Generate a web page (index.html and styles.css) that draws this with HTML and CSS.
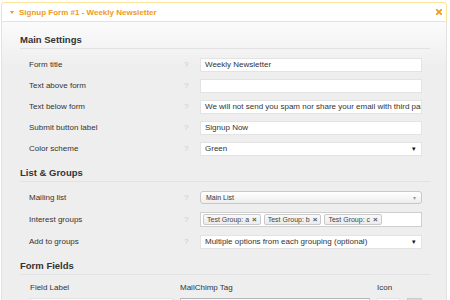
FILE: index.html
```html
<!DOCTYPE html>
<html lang="en">
<head>
  <meta charset="UTF-8">
  <title>Signup Form #1 - Weekly Newsletter</title>
  <link rel="stylesheet" href="styles.css">
</head>
<body>

  <div class="panel">
    <div class="panel-header">
      <span class="caret"></span>
      <span class="panel-title">Signup Form #1 - Weekly Newsletter</span>
      <svg class="close" width="6" height="6" viewBox="0 0 6 6">
        <path d="M0.8 0.8 L5.2 5.2 M5.2 0.8 L0.8 5.2" stroke="#f09a1a" stroke-width="1.8" stroke-linecap="square"/>
      </svg>
    </div>

    <div class="panel-body">
      <h2 class="section-title">Main Settings</h2>

      <div class="row">
        <span class="row-label">Form title</span>
        <span class="help">?</span>
        <div class="field">Weekly Newsletter</div>
      </div>
      <div class="row">
        <span class="row-label">Text above form</span>
        <span class="help">?</span>
        <div class="field"></div>
      </div>
      <div class="row">
        <span class="row-label">Text below form</span>
        <span class="help">?</span>
        <div class="field">We will not send you spam nor share your email with third parties.</div>
      </div>
      <div class="row">
        <span class="row-label">Submit button label</span>
        <span class="help">?</span>
        <div class="field">Signup Now</div>
      </div>
      <div class="row">
        <span class="row-label">Color scheme</span>
        <span class="help">?</span>
        <div class="field select">
          <span class="select-text">Green</span>
          <span class="arrow">&#9662;</span>
        </div>
      </div>

      <h2 class="section-title">List &amp; Groups</h2>

      <div class="row">
        <span class="row-label">Mailing list</span>
        <span class="help">?</span>
        <div class="chosen">
          <span class="select-text">Main List</span>
          <span class="arrow">&#9662;</span>
        </div>
      </div>
      <div class="row row-tall">
        <span class="row-label">Interest groups</span>
        <span class="help">?</span>
        <div class="tags">
          <span class="tag">Test Group: a <b>&#215;</b></span>
          <span class="tag">Test Group: b <b>&#215;</b></span>
          <span class="tag">Test Group: c <b>&#215;</b></span>
        </div>
      </div>
      <div class="row">
        <span class="row-label">Add to groups</span>
        <span class="help">?</span>
        <div class="field select">
          <span class="select-text">Multiple options from each grouping (optional)</span>
          <span class="arrow">&#9662;</span>
        </div>
      </div>

      <h2 class="section-title section-title-last">Form Fields</h2>

      <div class="fields-grid">
        <span>Field Label</span>
        <span>MailChimp Tag</span>
        <span>Icon</span>
        <span></span>
        <div class="field"></div>
        <div class="field field-dark"></div>
        <div class="field"></div>
        <div class="icon-btn"></div>
      </div>
    </div>
  </div>

</body>
</html>
```

FILE: styles.css
```css
* {
  box-sizing: border-box;
  margin: 0;
  padding: 0;
}

body {
  font-family: 'Liberation Sans', Arial, sans-serif;
  font-size: 8px;
  color: #333;
  background-color: #fff;
  width: 450px;
  height: 300px;
  overflow: hidden;
}

.panel {
  margin: 2px 3px 0 1px;
}

.panel-header {
  height: 20px;
  display: flex;
  align-items: center;
  padding: 0 4px 0 8px;
  background-color: #fff;
  border: 1px solid #fbe39a;
  border-radius: 3px 3px 0 0;
}

.caret {
  border-left: 2.5px solid transparent;
  border-right: 2.5px solid transparent;
  border-top: 3px solid #f09a1a;
  margin-right: 5px;
}

.panel-title {
  flex: 1;
  font-weight: bold;
  color: #f09a1a;
}

.panel-body {
  height: 290px;
  padding: 4px 16px 0 18px;
  background: linear-gradient(#fbfbfb, #eee 45px);
  border: 1px solid #e2e2e2;
  border-top: none;
  overflow: hidden;
}

.section-title {
  font-size: 9.5px;
  line-height: 12px;
  font-weight: bold;
  color: #333;
  margin-top: 8px;
  margin-bottom: 5px;
  padding-bottom: 2px;
  border-bottom: 1px solid #e2e2e2;
}

.section-title-last {
  margin-top: 8px;
}

.row {
  display: flex;
  align-items: center;
  height: 21px;
  padding: 0 8px 0 9px;
}

.row-tall {
  height: 23px;
}

.row-label {
  width: 154px;
}

.help {
  width: 17px;
  padding-left: 1px;
  color: #ccc;
}

.field {
  flex: 1;
  height: 14px;
  line-height: 12px;
  padding: 0 4px;
  background-color: #fff;
  border: 1px solid #e3e3e3;
  white-space: nowrap;
  overflow: hidden;
}

.select {
  display: flex;
  align-items: center;
}

.select-text {
  flex: 1;
  overflow: hidden;
}

.arrow {
  font-size: 7px;
  color: #111;
  padding-right: 1px;
}

.chosen {
  flex: 1;
  height: 13px;
  display: flex;
  align-items: center;
  padding: 0 4px 0 5px;
  font-size: 7px;
  background: linear-gradient(#fff, #eee);
  border: 1px solid #c8c8c8;
  border-radius: 3px;
}

.chosen .arrow {
  color: #999;
  font-size: 6px;
}

.tags {
  flex: 1;
  height: 15px;
  display: flex;
  align-items: center;
  gap: 3px;
  padding: 0 2px;
  background-color: #fff;
  border: 1px solid #cfcfcf;
}

.tag {
  height: 11px;
  display: flex;
  align-items: center;
  gap: 3px;
  padding: 0 3px;
  font-size: 7px;
  color: #444;
  background: linear-gradient(#f9f9f9, #ececec);
  border: 1px solid #c9c9c9;
  border-radius: 2px;
}

.tag b {
  font-size: 8px;
  color: #555;
}

.fields-grid {
  display: grid;
  grid-template-columns: 143px 190px 23px 15px;
  grid-template-rows: 12px 14px;
  column-gap: 7px;
  row-gap: 4px;
  padding: 2px 0 0 10px;
  line-height: 12px;
}

.field-dark {
  border-color: #c8c8c8;
  border-top-color: #b5b5b5;
}

.icon-btn {
  height: 14px;
  background-color: #d9d9d9;
  border: 1px solid #ccc;
}
```
